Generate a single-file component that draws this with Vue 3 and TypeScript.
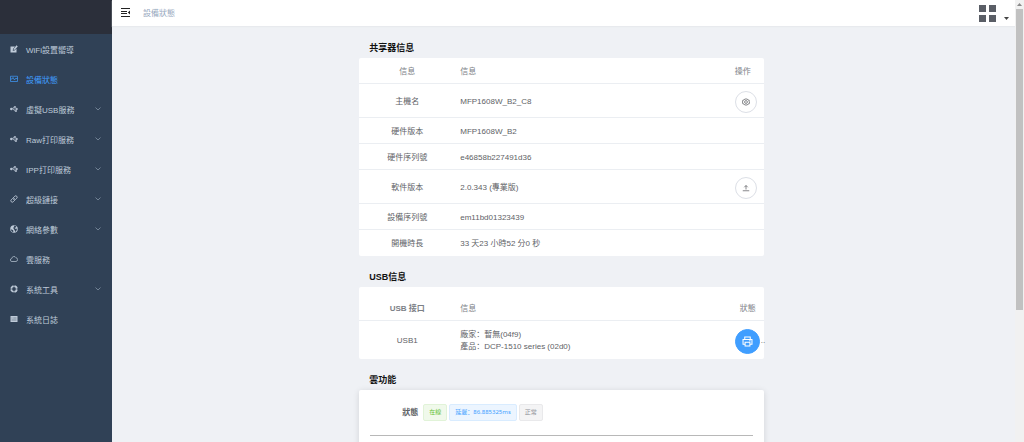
<script setup lang="ts">
interface MenuItem {
  label: string
  icon: 'edit' | 'monitor' | 'usb' | 'link' | 'globe' | 'cloud' | 'ring' | 'log'
  expandable?: boolean
  active?: boolean
}

interface InfoRow {
  name: string
  value: string
  action?: 'settings' | 'upload'
}

const menu: MenuItem[] = [
  { label: 'WiFi設置嚮導', icon: 'edit' },
  { label: '設備狀態', icon: 'monitor', active: true },
  { label: '虛擬USB服務', icon: 'usb', expandable: true },
  { label: 'Raw打印服務', icon: 'usb', expandable: true },
  { label: 'IPP打印服務', icon: 'usb', expandable: true },
  { label: '超級鏈接', icon: 'link', expandable: true },
  { label: '網絡參數', icon: 'globe', expandable: true },
  { label: '雲服務', icon: 'cloud' },
  { label: '系統工具', icon: 'ring', expandable: true },
  { label: '系統日誌', icon: 'log' },
]

const rows: InfoRow[] = [
  { name: '主機名', value: 'MFP1608W_B2_C8', action: 'settings' },
  { name: '硬件版本', value: 'MFP1608W_B2' },
  { name: '硬件序列號', value: 'e46858b227491d36' },
  { name: '軟件版本', value: '2.0.343 (專業版)', action: 'upload' },
  { name: '設備序列號', value: 'em11bd01323439' },
  { name: '開機時長', value: '33 天23 小時52 分0 秒' },
]
</script>

<template>
  <div class="app">
    <aside class="sidebar">
      <div class="brand"></div>
      <nav>
        <a v-for="item in menu" :key="item.label" href="#" class="item" :class="{ active: item.active }">
          <svg class="icon" viewBox="0 0 16 16" aria-hidden="true">
            <g v-if="item.icon === 'edit'">
              <path fill="currentColor" d="M1 3h9L6 8l-.5 3.500L9 11l4-4v8H1z" />
              <path fill="currentColor" d="M13 .5 15.500 3 9.500 9.500 7 10l.5-2.500z" />
            </g>
            <g v-else-if="item.icon === 'monitor'" fill="none" stroke="currentColor" stroke-width="1.400">
              <path d="M1 2.500h14v10.500H1zM1 8h3l2-3 3 5 2-3h4" />
            </g>
            <g v-else-if="item.icon === 'usb'" fill="none" stroke="currentColor" stroke-width="1.300">
              <path d="M2 8h11M4.500 8l3-4h2M6.500 8l3 4h2" />
              <circle cx="2.500" cy="8" r="1.800" fill="currentColor" />
              <path fill="currentColor" d="M12.500 6v4L15.500 8zM9 3h2v2H9zM11 11h2v2h-2z" />
            </g>
            <g v-else-if="item.icon === 'link'" fill="none" stroke="currentColor" stroke-width="1.800" stroke-linecap="round">
              <path d="m7 5 2.500-2.500a2.800 2.800 0 0 1 4 4L11 9a2.800 2.800 0 0 1-4 0" />
              <path d="m9 11-2.500 2.500a2.800 2.800 0 0 1-4-4L5 7a2.800 2.800 0 0 1 4 0" />
            </g>
            <g v-else-if="item.icon === 'globe'">
              <circle cx="8" cy="8" r="7.500" fill="currentColor" />
              <path fill="#304156" d="m9 1 4 2-1.500 2L9 5.500l1.500 2H14L13 11l-2 3-1.500-3L8 8.500 6.500 6 8 3.500zM1.500 8.500l4 1.500L7 12l-1 2.500L3 12.500z" />
            </g>
            <path v-else-if="item.icon === 'cloud'" fill="none" stroke="currentColor" stroke-width="1.400" d="M4 13a3 3 0 0 1-.5-6A4.500 4.500 0 0 1 12 5.500 3.800 3.800 0 0 1 12 13z" />
            <g v-else-if="item.icon === 'ring'" fill="none" stroke="currentColor">
              <circle cx="8" cy="8" r="5.600" stroke-width="3.600" />
              <path stroke="#304156" stroke-width="2" d="M8 0v3M8 13v3M0 8h3M13 8h3" />
            </g>
            <g v-else>
              <path fill="currentColor" d="M1 2h14v12H1z" />
              <path stroke="#304156" stroke-width="1" d="M3 6h2M6.500 6H13M3 10h10" />
            </g>
          </svg>
          <span class="label">{{ item.label }}</span>
          <svg v-if="item.expandable" class="arrow" viewBox="0 0 6 6" aria-hidden="true">
            <path fill="none" stroke="currentColor" stroke-width="0.800" d="m.5 1.500 2.500 2.500L5.500 1.500" />
          </svg>
        </a>
      </nav>
    </aside>

    <div class="main">
      <header class="topbar">
        <button type="button" class="plain" aria-label="menu">
          <svg class="fold" viewBox="0 0 10 9" aria-hidden="true">
            <path fill="#222" d="M0 0h9v1H0zM0 3h6v1H0zM0 5h6v1H0zM0 8h9v1H0zM9 2.500v4L6.800 4.500z" />
          </svg>
        </button>
        <span class="crumb">設備狀態</span>
        <button type="button" class="plain user" aria-label="apps">
          <svg class="grid" viewBox="0 0 17 17" aria-hidden="true">
            <path fill="#5a5e66" d="M0 0h7v7H0zM10 0h7v7h-7zM0 10h7v7H0zM10 10h7v7h-7z" />
          </svg>
          <svg class="caret" viewBox="0 0 5 3" aria-hidden="true">
            <path fill="#444" d="M0 0h5L2.500 3z" />
          </svg>
        </button>
      </header>

      <main class="content">
        <div class="column">
          <h2>共享器信息</h2>
          <table class="card">
            <thead>
              <tr>
                <th class="name">信息</th>
                <th>信息</th>
                <th class="op">操作</th>
              </tr>
            </thead>
            <tbody>
              <tr v-for="row in rows" :key="row.name" :class="{ tall: row.action }">
                <td class="name">{{ row.name }}</td>
                <td>{{ row.value }}</td>
                <td class="op">
                  <button v-if="row.action" type="button" class="round" :aria-label="row.action">
                    <svg viewBox="0 0 16 16" fill="none" stroke="currentColor" stroke-width="1.500" aria-hidden="true">
                      <g v-if="row.action === 'settings'">
                        <path d="M5.500 2h5L12 4l2.500.5v3L15 8l-.5 3.500L12 12l-1.500 2h-5L4 12l-2.500-.5L1 8l.5-3.500L4 4z" />
                        <circle cx="8" cy="8" r="2.800" />
                      </g>
                      <path v-else d="M1.500 13.500h13M8 11V3M4.500 6.500 8 3l3.500 3.500" />
                    </svg>
                  </button>
                </td>
              </tr>
            </tbody>
          </table>

          <h2>USB信息</h2>
          <table class="card usb">
            <thead>
              <tr>
                <th class="name strong">USB 接口</th>
                <th>信息</th>
                <th class="op">狀態</th>
              </tr>
            </thead>
            <tbody>
              <tr>
                <td class="name">USB1</td>
                <td>廠家：暫無(04f9)<br />產品：DCP-1510 series (02d0)</td>
                <td class="op">
                  <div class="state">
                    <button type="button" class="round primary" aria-label="printer">
                      <svg viewBox="0 0 16 16" fill="none" stroke="currentColor" stroke-width="1.500" aria-hidden="true">
                        <path d="M4 5V1.500h8V5M4 12H1.500V5h13v7H12M4.500 9h7v5.500h-7zM10.500 7h2" />
                      </svg>
                    </button>
                    <span>..</span>
                  </div>
                </td>
              </tr>
            </tbody>
          </table>

          <h2>雲功能</h2>
          <section class="card cloud">
            <div class="status">
              <span class="title">狀態</span>
              <span class="tag green">在線</span>
              <span class="tag blue">延遲：86.885325ms</span>
              <span class="tag grey">正常</span>
            </div>
            <hr />
          </section>
        </div>
      </main>
    </div>

    <div class="scroll" aria-hidden="true">
      <svg viewBox="0 0 7 9"><path fill="#8a8a8a" d="M1 6h5L3.500 3z" /></svg>
      <div class="thumb"></div>
    </div>
  </div>
</template>

<style>
body {
  margin: 0;
}
</style>

<style scoped>
.app {
  display: flex;
  height: 100vh;
  overflow: hidden;
  background: #eff1f5;
  color: #606266;
  font: 8px/12px "Liberation Sans", "Noto Sans CJK SC", sans-serif;
}

.app * {
  box-sizing: border-box;
}

button {
  font: inherit;
  cursor: pointer;
}

.sidebar {
  flex: 0 0 112px;
  background: #304156;
}

.brand {
  height: 34px;
  margin-bottom: 2px;
  background: #2b2f3a;
}

.item {
  display: flex;
  align-items: center;
  height: 30px;
  padding: 0 11px 0 10px;
  color: #bfcbd9;
  text-decoration: none;
}

.item.active {
  color: #409eff;
}

.icon {
  width: 8px;
  height: 8px;
  margin: 0 8px 4px 0;
}

.label {
  flex: 1;
}

.arrow {
  width: 6px;
  height: 6px;
  margin-bottom: 4px;
  color: #8393a5;
}

.main {
  flex: 1;
  min-width: 0;
}

.topbar {
  display: flex;
  align-items: center;
  height: 26px;
  padding: 0 6px 0 9px;
  background: #fff;
  box-shadow: 0 1px 1px #e8eaee;
}

.plain {
  display: flex;
  padding: 0;
  border: 0;
  background: none;
}

.fold {
  width: 10px;
  height: 9px;
  margin-bottom: 2px;
}

.crumb {
  flex: 1;
  padding: 2px 0 0 12px;
  color: #97a8be;
}

.user {
  align-items: flex-end;
  gap: 8px;
}

.grid {
  width: 17px;
  height: 17px;
}

.caret {
  width: 5px;
  height: 3px;
  margin-bottom: 2px;
}

.content {
  padding: 16px 4px 0 0;
}

.column {
  width: 45%;
  margin: 0 auto;
}

h2 {
  margin: 0 0 4px 10px;
  color: #111;
  font-size: 9px;
  line-height: 12px;
}

.card {
  width: 100%;
  margin-bottom: 15px;
  border-radius: 2px;
  background: #fff;
}

table {
  table-layout: fixed;
  border-spacing: 0;
}

th,
td {
  height: 26px;
  padding: 2px 5px 0;
  border-bottom: 1px solid #ebeef2;
  font-weight: 400;
  text-align: left;
}

tbody tr:last-child td {
  border-bottom: 0;
}

th {
  color: #7c8086;
}

.tall td {
  height: 34px;
}

.name {
  width: 96px;
  text-align: center;
}

.op {
  width: 34px;
}

.strong {
  font-weight: 700;
}

.round {
  display: flex;
  align-items: center;
  justify-content: center;
  width: 22px;
  height: 22px;
  padding: 0;
  border: 1px solid #dcdfe6;
  border-radius: 50%;
  background: #fff;
  color: #606266;
}

.round svg {
  width: 8px;
  height: 8px;
}

.usb th {
  height: 34px;
  padding-top: 10px;
}

.usb td {
  height: 38px;
}

.usb th.op {
  padding-left: 10px;
}

.state {
  display: flex;
  align-items: center;
  gap: 1px;
}

.round.primary {
  flex: none;
  width: 25px;
  height: 25px;
  border-color: #409eff;
  background: #409eff;
  color: #fff;
}

.primary svg {
  width: 11px;
  height: 11px;
}

.cloud {
  height: 120px;
  padding: 14px 11px;
  box-shadow: 0 1px 6px rgba(0, 0, 0, 0.12);
}

.status {
  display: flex;
  align-items: center;
  gap: 2px;
  padding-left: 32px;
}

.title {
  margin-right: 3px;
  font-weight: 700;
}

.tag {
  padding: 0 5px;
  border: 1px solid;
  border-radius: 2px;
  font-family: "Noto Sans", "Noto Sans CJK SC", sans-serif;
  font-size: 6px;
  line-height: 15px;
}

.green {
  border-color: #e1f3d8;
  background: #f0f9eb;
  color: #67c23a;
}

.blue {
  border-color: #d9ecff;
  background: #ecf5ff;
  color: #409eff;
}

.grey {
  border-color: #e9e9eb;
  background: #f4f4f5;
  color: #909399;
}

hr {
  height: 1px;
  margin: 14px 0 0;
  border: 0;
  background: #b8b8b8;
}

.scroll {
  flex: 0 0 9px;
  padding: 0 1px;
  background: #f1f1f1;
}

.scroll svg {
  display: block;
  width: 7px;
  height: 9px;
}

.thumb {
  height: 68%;
  background: #c1c1c1;
}
</style>
